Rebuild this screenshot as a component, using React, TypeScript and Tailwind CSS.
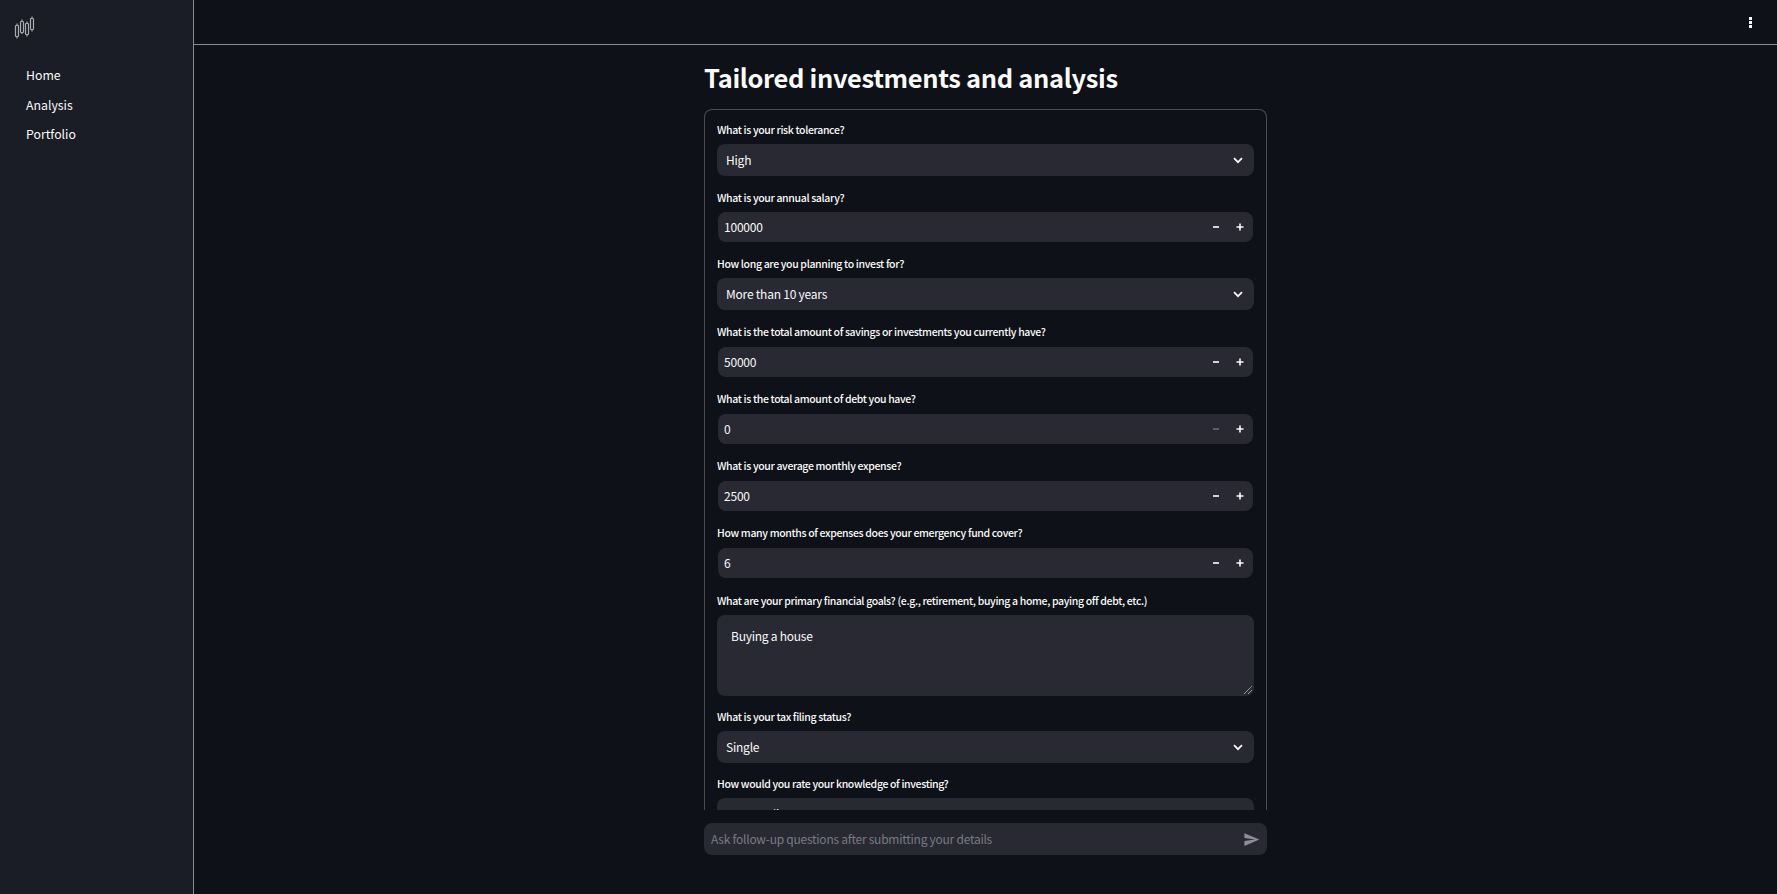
import React from "react";

const font = { fontFamily: '"Noto Sans CJK SC", "Noto Sans", sans-serif' };

function Chevron() {
  return (
    <svg width="16" height="16" viewBox="0 0 16 16" fill="none" className="shrink-0">
      <path d="M4 6.2l4 4 4-4" stroke="#fafafa" strokeWidth="1.7" />
    </svg>
  );
}

function Select({ value }: { value: string }) {
  return (
    <div className="flex h-8 items-center justify-between rounded-lg bg-[#282932] pl-[9px] pr-[8px] text-[12px] tracking-[-0.22px] text-[#fafafa]">
      <span>{value}</span>
      <Chevron />
    </div>
  );
}

function NumberInput({ value, minusDisabled }: { value: string; minusDisabled?: boolean }) {
  return (
    <div className="mx-px flex h-[30px] items-center justify-between rounded-lg bg-[#282932] pl-[6px] text-[12px] tracking-[-0.22px] text-[#fafafa]">
      <span>{value}</span>
      <div className="flex items-center pr-px">
        <span className="flex h-[30px] w-[25px] items-center justify-center">
          <svg width="8" height="8" viewBox="0 0 8 8">
            <rect x="1" y="3.2" width="6" height="1.6" fill={minusDisabled ? "#6a6b75" : "#fafafa"} />
          </svg>
        </span>
        <span className="flex h-[30px] w-[24px] items-center justify-center">
          <svg width="8" height="8" viewBox="0 0 8 8">
            <path d="M.5 3.2h2.7V.5h1.6v2.7h2.7v1.6H4.8v2.7H3.2V4.8H.5z" fill="#fafafa" />
          </svg>
        </span>
      </div>
    </div>
  );
}

function Field({
  label,
  children,
  mb,
  gap = "mb-[6px]",
}: {
  label: string;
  children: React.ReactNode;
  mb: string;
  gap?: string;
}) {
  return (
    <div className={mb}>
      <div className={`${gap} h-[16px] text-[10.5px] leading-[16px] font-medium tracking-[-0.35px] text-[#fafafa]`}>
        {label}
      </div>
      {children}
    </div>
  );
}

export default function App() {
  return (
    <div className="flex h-screen w-full overflow-hidden bg-[#0e1117] text-[#fafafa]" style={font}>
      <aside className="flex w-[194px] shrink-0 flex-col border-r border-[#8a8b8d] bg-[#1a1d26]">
        <div className="pl-[14px] pt-[16px]">
          <svg width="22" height="24" viewBox="0 0 22 24" fill="none" stroke="#a9abaf" strokeWidth="1.2">
            <rect x="1.5" y="9.5" width="3" height="11" rx="0.8" />
            <path d="M3 7.5v2M3 20.5v2" />
            <rect x="6.5" y="5.5" width="3" height="11" rx="0.8" />
            <path d="M8 3.5v2M8 16.5v1.5" />
            <rect x="11.5" y="7.5" width="3" height="11" rx="0.8" />
            <path d="M13 5.5v2M13 18.5v2" />
            <rect x="16.5" y="2.5" width="3" height="11" rx="0.8" />
            <path d="M18 .5v2M18 13.5v2" />
          </svg>
        </div>
        <nav className="mt-[23px] flex flex-col gap-[5px] pl-[26px] text-[12.3px] text-[#fafafa]">
          <div className="h-[24.5px] leading-[24px]">Home</div>
          <div className="h-[24.5px] leading-[24px]">Analysis</div>
          <div className="h-[24.5px] leading-[24px]">Portfolio</div>
        </nav>
      </aside>
      <main className="flex min-w-0 flex-1 flex-col">
        <header className="flex h-[45px] shrink-0 items-start justify-end border-b border-[#8a8b8d] pr-[24px] pt-[17px]">
          <svg width="4" height="12" viewBox="0 0 4 12" fill="#fafafa">
            <rect x="0" y="0" width="3" height="3" />
            <rect x="0" y="4" width="3" height="3" />
            <rect x="0" y="8" width="3" height="3" />
          </svg>
        </header>
        <div className="flex min-h-0 flex-1 flex-col items-center">
          <div className="flex min-h-0 w-[563px] flex-1 flex-col">
            <h1 className="mt-[12px] h-[40px] text-[25.5px] leading-[40px] font-semibold tracking-[-0.35px] text-[#fafafa]">
              Tailored investments and analysis
            </h1>
            <div className="mt-[12px] min-h-0 flex-1 overflow-hidden rounded-t-lg border border-b-0 border-[#4a4c50] px-[12px] pt-[12px]">
              <Field label="What is your risk tolerance?" mb="mb-[14px]">
                <Select value="High" />
              </Field>
              <Field label="What is your annual salary?" mb="mb-[14px]">
                <NumberInput value="100000" />
              </Field>
              <Field label="How long are you planning to invest for?" mb="mb-[14px]">
                <Select value="More than 10 years" />
              </Field>
              <Field label="What is the total amount of savings or investments you currently have?" mb="mb-[14px]" gap="mb-[7px]">
                <NumberInput value="50000" />
              </Field>
              <Field label="What is the total amount of debt you have?" mb="mb-[14px]" gap="mb-[7px]">
                <NumberInput value="0" minusDisabled />
              </Field>
              <Field label="What is your average monthly expense?" mb="mb-[14px]" gap="mb-[7px]">
                <NumberInput value="2500" />
              </Field>
              <Field label="How many months of expenses does your emergency fund cover?" mb="mb-[15px]" gap="mb-[7px]">
                <NumberInput value="6" />
              </Field>
              <Field label="What are your primary financial goals? (e.g., retirement, buying a home, paying off debt, etc.)" mb="mb-[13px]">
                <div className="relative h-[81px] rounded-lg bg-[#282932] px-[14px] py-[11px] text-[12px] leading-[20px] tracking-[-0.25px] text-[#fafafa]">
                  Buying a house
                  <svg width="10" height="10" viewBox="0 0 10 10" className="absolute bottom-[1px] right-[1px]" stroke="#c9cacd" strokeWidth="1" fill="none">
                    <path d="M1 9L9 1M5 9L9 5" strokeDasharray="1 0.5" />
                  </svg>
                </div>
              </Field>
              <Field label="What is your tax filing status?" mb="mb-[13px]">
                <Select value="Single" />
              </Field>
              <Field label="How would you rate your knowledge of investing?" mb="mb-[14px]">
                <Select value="Intermediate" />
              </Field>
            </div>
            <div className="mb-[39px] mt-[13px] flex h-[32px] shrink-0 items-center justify-between rounded-lg bg-[#282932] pl-[7px] pr-[7px] text-[12px] tracking-[-0.25px]">
              <span className="text-[#797b84]">Ask follow-up questions after submitting your details</span>
              <svg width="17" height="17" viewBox="0 0 24 24" fill="#8d8f9c">
                <path d="M2.01 21L23 12 2.01 3 2 10l15 2-15 2z" />
              </svg>
            </div>
          </div>
        </div>
      </main>
    </div>
  );
}
